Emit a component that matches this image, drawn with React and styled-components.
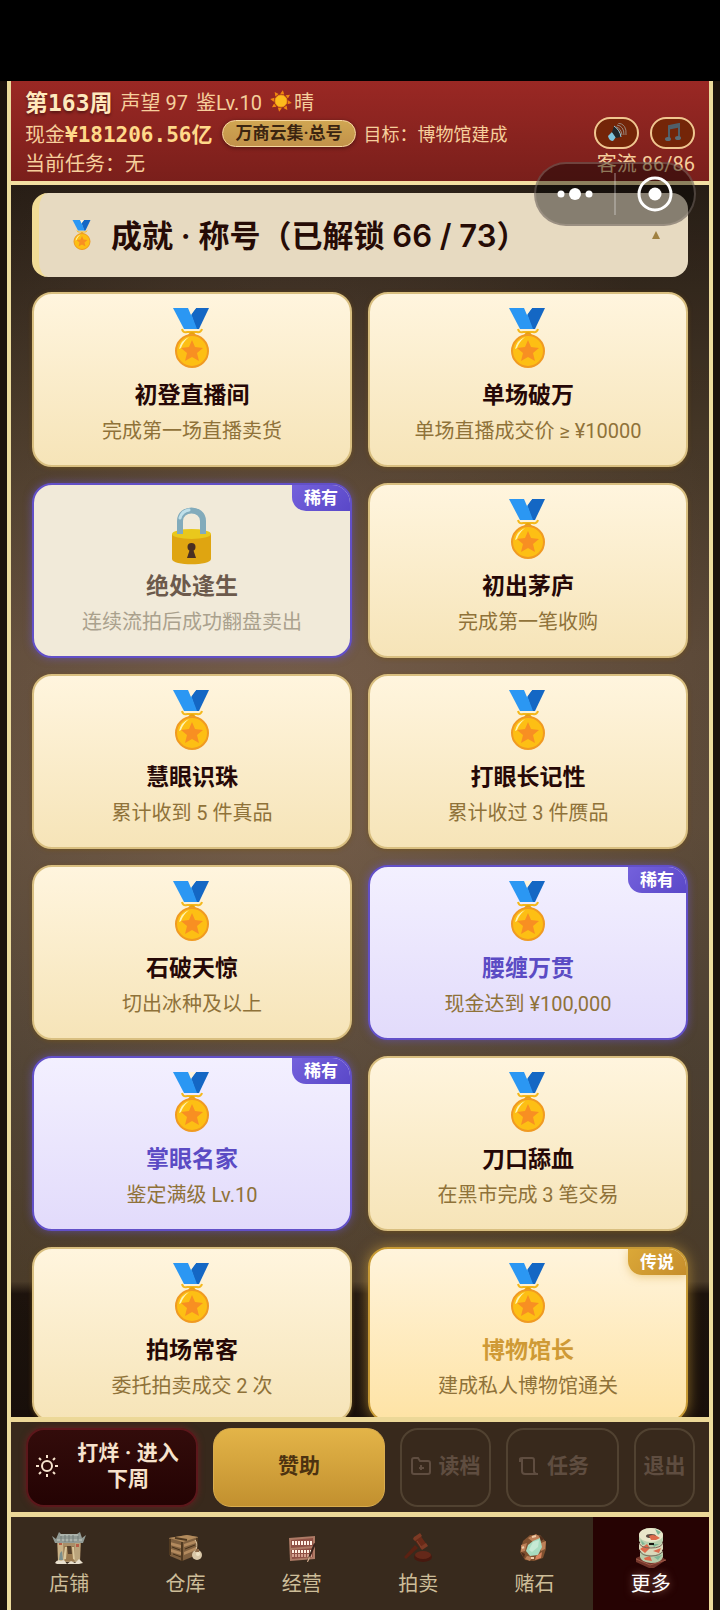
import { useState } from 'react';
import styled, { createGlobalStyle } from 'styled-components';

const achievements = [
    { name: '初登直播间', desc: '完成第一场直播卖货' },
    { name: '单场破万', desc: '单场直播成交价 ≥ ¥10000' },
    { name: '绝处逢生', desc: '连续流拍后成功翻盘卖出', rarity: 'rare', locked: true },
    { name: '初出茅庐', desc: '完成第一笔收购' },
    { name: '慧眼识珠', desc: '累计收到 5 件真品' },
    { name: '打眼长记性', desc: '累计收过 3 件赝品' },
    { name: '石破天惊', desc: '切出冰种及以上' },
    { name: '腰缠万贯', desc: '现金达到 ¥100,000', rarity: 'rare' },
    { name: '掌眼名家', desc: '鉴定满级 Lv.10', rarity: 'rare' },
    { name: '刀口舔血', desc: '在黑市完成 3 笔交易' },
    { name: '拍场常客', desc: '委托拍卖成交 2 次' },
    { name: '博物馆长', desc: '建成私人博物馆通关', rarity: 'legend' },
];

const rarityLabel = { rare: '稀有', legend: '传说' };

const MedalShape = () => (
    <>
        <path d="M22 33Q23 37 27 36H37Q41 37 42 33" fill="none" stroke="#f4b81c" strokeWidth="2" />
        <path d="M29 39Q32 35 35 39" fill="none" stroke="#e9a20e" strokeWidth="2" />
        <path d="M36 12H49L39 33H36L31 18Z" fill="#1467c4" />
        <path d="M13 12H29L37 33H24Z" fill="#2b97f3" />
        <path d="M28 12H36L31 19Z" fill="#fff3da" />
        <circle cx="32" cy="55" r="16" fill="#fdbf14" stroke="#f09a22" strokeWidth="2" />
        <path d="M19 53Q21 44 29 41Q23 46 21 52Z" fill="#fff3b0" />
        <path d="M32 44L35 51L43 52L37 57L39 65L32 61L25 65L27 57L21 52L29 51Z" fill="#f88f22" />
    </>
);

const MedalIcon = () => (
    <svg viewBox="0 8 64 76" aria-hidden="true"><MedalShape /></svg>
);

const LockIcon = () => (
    <svg viewBox="0 -1 64 76" aria-hidden="true">
        <path d="M12 38V63C12 70 51 70 51 63V38Z" fill="#dfa511" />
        <ellipse cx="31.5" cy="38" rx="19.5" ry="5" fill="#e9c81c" />
        <path d="M20 38V25C20 11 43 11 43 25V38" fill="none" stroke="#82abbb" strokeWidth="6" />
        <path d="M20 22Q22 15 29 14" fill="none" stroke="#bfe0ea" strokeWidth="3" strokeLinecap="round" />
        <circle cx="31.5" cy="51" r="4" fill="#4a2f22" />
        <path d="M30 53H33L36 62H27Z" fill="#4a2f22" />
    </svg>
);

const SunEmoji = () => (
    <svg width="22" height="22" viewBox="0 0 22 22" aria-hidden="true">
        <g fill="#f2880f">
            {[0, 45, 90, 135, 180, 225, 270, 315].map((a) => (
                <path key={a} d="M11 0L13 4H9Z" transform={`rotate(${a + 10} 11 11)`} />
            ))}
        </g>
        <circle cx="11" cy="11" r="6" fill="#fdbb1c" stroke="#f59a15" strokeWidth="1" />
    </svg>
);

const SpeakerIcon = () => (
    <svg width="20" height="20" viewBox="0 0 20 20" aria-hidden="true">
        <path d="M1 13L5 9L9 14L6 18Q2 18 1 13Z" fill="#7fc4dc" />
        <path d="M5 9L7 3Q13 7 14 14L9 15Z" fill="#20272b" />
        <path d="M7 3Q13 7 14 14" fill="none" stroke="#9ccfe0" strokeWidth="1" />
        <g fill="none" stroke="#98877c" strokeWidth="1">
            <path d="M9 4Q14 5 15 12" />
            <path d="M10 2Q17 3 17 12" />
            <path d="M11 0Q20 1 19 12" />
        </g>
    </svg>
);

const NoteIcon = () => (
    <svg width="18" height="20" viewBox="0 0 18 20" aria-hidden="true">
        <path d="M5 16V3L15 1V14" fill="none" stroke="#50606a" strokeWidth="2" />
        <path d="M5 5L15 3" stroke="#50606a" strokeWidth="3" />
        <ellipse cx="4" cy="16" rx="3" ry="2" fill="#5b6d78" />
        <ellipse cx="14" cy="15" rx="3" ry="2" fill="#5b6d78" />
    </svg>
);

const DayIcon = () => (
    <svg width="22" height="22" viewBox="0 0 22 22" fill="none" stroke="currentColor" strokeWidth="2" aria-hidden="true">
        <circle cx="11" cy="11" r="5" />
        <path d="M11 0V3M11 19V22M0 11H3M19 11H22M3 3L5 5M17 17L19 19M19 3L17 5M5 17L3 19" />
    </svg>
);

const FolderIcon = () => (
    <svg width="20" height="20" viewBox="0 0 20 20" fill="none" stroke="currentColor" strokeWidth="2" aria-hidden="true">
        <path d="M1 4Q1 2 3 2H7L9 5H17Q19 5 19 7V16Q19 18 17 18H3Q1 18 1 16Z" />
        <path d="M10 9V14M8 12H13" />
    </svg>
);

const ScrollIcon = () => (
    <svg width="20" height="20" viewBox="0 0 20 20" fill="none" stroke="currentColor" strokeWidth="2" aria-hidden="true">
        <path d="M1 6V3Q1 2 3 2H13Q15 2 15 4V15Q15 18 19 18H6Q3 18 3 15V3" />
    </svg>
);

const ShopIcon = () => (
    <svg width="36" height="36" viewBox="0 0 36 36" aria-hidden="true">
        <path d="M6 12H30L29 32H7Z" fill="#a98e68" />
        <path d="M7 13H12V32H7Z" fill="#c9b287" />
        <path d="M24 13H29V32H24Z" fill="#baa47c" />
        <path d="M13 16H23V31H13Z" fill="#9a7a50" />
        <path d="M16 16H20L21 24H17Z" fill="#54402a" />
        <path d="M14 17L16 17L15 29L12 30ZM21 17H23L24 30L22 29Z" fill="#dac79b" />
        <path d="M8 13H11V15H8ZM25 14H28V17H25Z" fill="#b85c45" />
        <path d="M1 6L5 9L8 2L10 4H26L29 2L31 8L35 5L32 13H4Z" fill="#929b95" />
        <path d="M9 5H27M6 10H31" stroke="#c6cbc1" strokeWidth="1" />
        <path d="M10 6V11M14 5V12M18 5V12M22 5V12M27 6V11" stroke="#737d78" strokeWidth="1" />
        <path d="M4 33Q6 29 10 31L13 30L16 34L20 31L24 33L28 29L32 33L28 34H6Z" fill="#e9e0ce" />
        <path d="M9 23L11 21L12 30H8Z" fill="#7c8f8c" />
    </svg>
);

const CrateIcon = () => (
    <svg width="36" height="36" viewBox="0 0 36 36" aria-hidden="true">
        <path d="M2 8L20 5L31 7L30 25L15 31L3 26Z" fill="#80603f" />
        <path d="M2 8L20 5L31 7L16 12Z" fill="#b38b5c" />
        <path d="M3 12L14 15V18L3 15ZM4 19L14 22V25L4 22ZM17 14L29 10V13L17 17ZM17 22L29 17V20L17 25Z" fill="#b38a5e" />
        <path d="M3 9V25M15 12V31M30 8V24M8 8L20 10" stroke="#503920" strokeWidth="2" />
        <path d="M5 17L13 20M18 19L28 15M6 24L14 27" stroke="#473119" strokeWidth="1" />
        <path d="M28 10Q31 13 29 20" fill="none" stroke="#d9c2a0" strokeWidth="1" />
        <circle cx="30" cy="25" r="5" fill="#d9c7a8" />
        <path d="M29 19H32V22H28Z" fill="#8d6a49" />
        <circle cx="31" cy="24" r="2" fill="#f0e2c5" />
    </svg>
);

const LedgerIcon = () => (
    <svg width="36" height="36" viewBox="0 0 36 36" aria-hidden="true">
        <path d="M5 8L31 6V29L6 31Z" fill="#ad7a65" />
        <path d="M7 10L29 8V16L7 18ZM7 20L29 18V27L8 29Z" fill="#8f5044" />
        {[8, 11, 14, 17, 20, 23, 26].map((x) => (
            <g key={x}>
                <path d={`M${x} 11H${x + 2}V15H${x}Z`} fill="#fff0e4" />
                <path d={`M${x} 20H${x + 2}V23H${x}Z`} fill="#fff0e1" />
                <path d={`M${x} 24H${x + 2}V27H${x}Z`} fill="#d4a08e" />
            </g>
        ))}
        <path d="M30 13L32 14L25 30L23 32L24 28Z" fill="#38231b" />
        <path d="M25 26L26 28L24 32H23Z" fill="#d8b394" />
    </svg>
);

const GavelIcon = () => (
    <svg width="36" height="36" viewBox="0 0 36 36" aria-hidden="true">
        <ellipse cx="23" cy="27" rx="9" ry="5" fill="#47190f" />
        <ellipse cx="23" cy="25" rx="8" ry="4" fill="#642819" />
        <path d="M4 27L15 15L18 18L6 29Z" fill="#5b2112" />
        <path d="M14 9L20 5L27 15L21 19Z" fill="#692a18" />
        <path d="M14 7L20 3L22 6L15 11L13 9ZM20 17L26 13L28 16L22 20Z" fill="#7d3a24" />
        <path d="M17 11L21 17" stroke="#85442f" strokeWidth="1" />
    </svg>
);

const StoneIcon = () => (
    <svg width="36" height="36" viewBox="0 0 36 36" aria-hidden="true">
        <path d="M7 11L14 5L24 5L30 12L30 19L27 28L18 31L9 30L4 22Z" fill="#80512f" />
        <path d="M12 8L20 4L25 8L17 12ZM5 15L11 13L9 21L5 22ZM25 13L30 11L29 19L25 21ZM11 26L16 27L14 31L9 29Z" fill="#bd8058" />
        <path d="M17 11L24 8L26 17L22 25L14 26L10 21L12 15Z" fill="#a8dcc0" />
        <path d="M17 12L23 10L22 17L16 22L13 20Z" fill="#c6e9d4" />
        <path d="M20 26L26 22L25 28L19 30Z" fill="#d7845d" />
        <path d="M23 5L28 9L25 11ZM5 22L9 24L8 28Z" fill="#4f2d1b" />
        <path d="M16 7L20 6M6 18L8 17M15 28L18 28" stroke="#f0cda9" strokeWidth="2" />
    </svg>
);

const JadeIcon = () => (
    <svg width="36" height="44" viewBox="0 0 36 44" aria-hidden="true">
        <path d="M3 32L12 28H25L33 34L21 42H16L3 36Z" fill="#74362b" />
        <path d="M3 33L17 39L33 34" fill="none" stroke="#a35a48" strokeWidth="1" />
        <path d="M7 27Q8 22 18 22Q29 22 30 27V31Q28 37 18 37Q8 36 7 31Z" fill="#b9ccaa" />
        <path d="M6 18Q8 13 18 13Q29 13 30 18V23Q28 29 18 29Q8 28 6 23Z" fill="#dbd9ba" />
        <path d="M6 10Q7 2 18 2Q29 2 30 10V15Q28 21 18 21Q8 20 6 15Z" fill="#b9cfad" />
        <ellipse cx="18" cy="9" rx="12" ry="7" fill="#e9e6ca" />
        <ellipse cx="18" cy="10" rx="5" ry="2" fill="#5c4940" />
        <path d="M16 10Q21 7 27 12L23 14H18ZM7 23L14 18L17 22L12 27ZM20 25L28 22L26 27ZM11 32L17 30L19 35L12 34Z" fill="#dd6a4b" />
        <path d="M22 3L28 6L25 9ZM8 14L12 18L9 19ZM21 31L29 29L25 34ZM19 18L26 18L21 21Z" fill="#80b696" />
        <path d="M6 17Q8 22 18 22Q28 22 30 17M7 25Q9 30 18 30Q27 30 30 25" fill="none" stroke="#77675a" strokeWidth="1" />
        <path d="M16 17H21V19H16Z" fill="#1a1713" />
    </svg>
);

const tabs = [
    { label: '店铺', Icon: ShopIcon },
    { label: '仓库', Icon: CrateIcon },
    { label: '经营', Icon: LedgerIcon },
    { label: '拍卖', Icon: GavelIcon },
    { label: '赌石', Icon: StoneIcon },
    { label: '更多', Icon: JadeIcon },
];

const App = () => {
    const [tab, setTab] = useState('更多');
    const [open, setOpen] = useState(true);

    return (
        <Screen>
            <GlobalStyle />
            <StatusBar />
            <Frame>
                <TopBar>
                    <InfoRow>
                        <Week>第163周</Week>
                        <span>声望 97</span>
                        <span>鉴Lv.10</span>
                        <Weather><SunEmoji />晴</Weather>
                    </InfoRow>
                    <InfoRow>
                        <Cash>现金<b>¥181206.56亿</b></Cash>
                        <RankPill>万商云集·总号</RankPill>
                        <Goal>目标：博物馆建成</Goal>
                        <SoundGroup>
                            <SoundButton aria-label="音效"><SpeakerIcon /></SoundButton>
                            <SoundButton aria-label="音乐"><NoteIcon /></SoundButton>
                        </SoundGroup>
                    </InfoRow>
                    <TaskRow>
                        <span>当前任务：无</span>
                        <Traffic>客流 86/86</Traffic>
                    </TaskRow>
                </TopBar>
                <Content>
                    <Summary aria-expanded={open} onClick={() => setOpen(!open)}>
                        <SummaryMedal viewBox="12 11 40 62" aria-hidden="true"><MedalShape /></SummaryMedal>
                        <SummaryTitle>成就 · 称号（已解锁 66 / 73）</SummaryTitle>
                        <Caret $open={open} />
                    </Summary>
                    {open && (
                        <Grid>
                            {achievements.map((item) => (
                                <Card key={item.name} $rarity={item.rarity} $locked={item.locked}>
                                    {item.rarity && <Badge $rarity={item.rarity}>{rarityLabel[item.rarity]}</Badge>}
                                    {item.locked ? <LockIcon /> : <MedalIcon />}
                                    <CardName $rarity={item.rarity} $locked={item.locked}>{item.name}</CardName>
                                    <CardDesc $locked={item.locked}>{item.desc}</CardDesc>
                                </Card>
                            ))}
                        </Grid>
                    )}
                </Content>
                <Actions>
                    <NextButton><DayIcon /><span>打烊 · 进入下周</span></NextButton>
                    <GoldButton>赞助</GoldButton>
                    <GhostButton><FolderIcon />读档</GhostButton>
                    <GhostButton $left><ScrollIcon />任务</GhostButton>
                    <GhostButton>退出</GhostButton>
                </Actions>
                <TabBar>
                    {tabs.map(({ label, Icon }) => (
                        <Tab key={label} $active={tab === label} onClick={() => setTab(label)}>
                            <TabIcon><Icon /></TabIcon>
                            {label}
                        </Tab>
                    ))}
                </TabBar>
            </Frame>
            <Capsule>
                <CapsuleButton aria-label="菜单">
                    <svg width="36" height="14" viewBox="0 0 36 14" fill="#fff">
                        <circle cx="4" cy="7" r="3.5" />
                        <circle cx="18" cy="7" r="6" />
                        <circle cx="32" cy="7" r="3.5" />
                    </svg>
                </CapsuleButton>
                <CapsuleLine />
                <CapsuleButton aria-label="关闭">
                    <svg width="36" height="36" viewBox="0 0 36 36">
                        <circle cx="18" cy="18" r="16" fill="none" stroke="#fff" strokeWidth="3" />
                        <circle cx="18" cy="18" r="6.5" fill="#fff" />
                    </svg>
                </CapsuleButton>
            </Capsule>
        </Screen>
    );
};

const GlobalStyle = createGlobalStyle`
    * {
        box-sizing: border-box;
    }
    body {
        margin: 0;
        background: #1c120c;
        font-family: Roboto, "Noto Sans CJK SC", sans-serif;
    }
    button {
        margin: 0;
        padding: 0;
        border: none;
        background: none;
        font-family: inherit;
        color: inherit;
        cursor: pointer;
    }
    svg {
        display: block;
        flex: none;
    }
`;
const Screen = styled.div`
    position: relative;
    display: flex;
    flex-direction: column;
    height: 100vh;
    overflow: hidden;
`;
const StatusBar = styled.div`
    flex: none;
    height: 81px;
    background: #000;
`;
const Frame = styled.div`
    flex: 1;
    min-height: 0;
    display: flex;
    flex-direction: column;
    margin: 0 7px;
    border: solid #ecdb9c;
    border-width: 0 4px;
`;
const TopBar = styled.header`
    flex: none;
    padding: 4px 14px 5px;
    border-bottom: 4px solid #f3dfa2;
    background: linear-gradient(#9a2824, #7a1f1b);
    color: #f6cf9c;
    font-size: 20px;
`;
const InfoRow = styled.div`
    display: flex;
    align-items: center;
    gap: 8px;
    height: 32px;
    white-space: nowrap;
`;
const TaskRow = styled(InfoRow)`
    height: 27px;
`;
const Week = styled.strong`
    font-family: "DejaVu Sans Mono", "Noto Sans CJK SC", monospace;
    font-size: 23px;
    color: #ffe9bd;
    text-shadow: 0 2px 3px rgba(0, 0, 0, 0.4);
`;
const Weather = styled.span`
    display: flex;
    align-items: center;
    gap: 2px;
`;
const Cash = styled.span`
    b {
        font-family: "DejaVu Sans Mono", "Noto Sans CJK SC", monospace;
        font-size: 21px;
        color: #ffd98a;
    }
`;
const RankPill = styled.span`
    height: 27px;
    margin-left: 2px;
    padding: 0 12px;
    border: 1px solid #f7d9a0;
    border-radius: 14px;
    background: linear-gradient(#d0a652, #c2924a);
    color: #3a2410;
    font-size: 17px;
    font-weight: 700;
    line-height: 24px;
    box-shadow: 0 1px 4px rgba(0, 0, 0, 0.4);
`;
const Goal = styled.span`
    font-size: 18px;
`;
const SoundGroup = styled.div`
    display: flex;
    gap: 11px;
    margin-left: auto;
`;
const SoundButton = styled.button`
    display: flex;
    align-items: center;
    justify-content: center;
    width: 45px;
    height: 32px;
    border: 2px solid #f0c690;
    border-radius: 16px;
    background: #742508;
`;
const Traffic = styled.span`
    margin-left: auto;
`;
const Content = styled.main`
    flex: 1;
    min-height: 0;
    overflow: hidden;
    padding: 8px 21px 0;
    background:
        radial-gradient(ellipse at 40% 45%, rgba(150, 118, 98, 0.3), rgba(0, 0, 0, 0.12) 75%),
        linear-gradient(#2c2118 0%, #4d3d2b 20%, #67523f 38%, #685440 52%, #564838 72%, #54432e 89%, #20150e 90%, #1b110b 100%);
`;
const Summary = styled.button`
    display: flex;
    align-items: center;
    width: 100%;
    height: 84px;
    padding: 0 28px 0 33px;
    border-left: 7px solid #f1dc96;
    border-radius: 16px;
    background: #e7dac1;
    text-align: left;
`;
const SummaryMedal = styled.svg`
    width: 20px;
    height: 34px;
`;
const SummaryTitle = styled.span`
    flex: 1;
    margin-left: 19px;
    padding-bottom: 4px;
    color: #260b06;
    font-family: Inter, "Noto Sans CJK SC", sans-serif;
    font-size: 31px;
    font-weight: 600;
`;
const Caret = styled.span`
    border: 4px solid transparent;
    border-top-width: 0;
    border-bottom: 8px solid #a08142;
    transform: rotate(${(p) => (p.$open ? 0 : 180)}deg);
`;
const Grid = styled.ul`
    display: grid;
    grid-template-columns: 1fr 1fr;
    gap: 16px;
    margin: 15px 0 0;
    padding: 0;
    list-style: none;
`;
const cardBorder = { rare: '#6250c8', legend: '#c79a35' };
const cardFill = {
    rare: 'linear-gradient(#f3f0ff, #e2dbfb)',
    legend: 'linear-gradient(#fff4dc, #fee3a5)',
};
const cardGlow = {
    rare: '0 0 8px rgba(104, 84, 210, 0.6)',
    legend: '0 0 14px rgba(220, 170, 60, 0.6)',
};
const Card = styled.li`
    position: relative;
    display: flex;
    flex-direction: column;
    align-items: center;
    padding: 10px 10px 21px;
    overflow: hidden;
    border: 2px solid ${(p) => cardBorder[p.$rarity] || '#d9bf80'};
    border-radius: 20px;
    background: ${(p) => (p.$locked ? '#f1ead9' : cardFill[p.$rarity] || 'linear-gradient(#fff5de, #f6e4b8)')};
    box-shadow: ${(p) => cardGlow[p.$rarity] || '0 1px 4px rgba(120, 85, 20, 0.6)'};

    svg {
        width: 64px;
        height: 76px;
    }
`;
const Badge = styled.span`
    position: absolute;
    top: 0;
    right: 0;
    padding: 0 12px;
    border-bottom-left-radius: 14px;
    background: ${(p) => (p.$rarity === 'legend' ? 'linear-gradient(135deg, #dba838, #c68e2c)' : 'linear-gradient(135deg, #7461dc, #5a48c8)')};
    box-shadow: ${(p) => (p.$rarity === 'legend' ? '0 2px 8px rgba(220, 170, 60, 0.5)' : 'none')};
    color: #fff;
    font-size: 17px;
    font-weight: 700;
    line-height: 26px;
`;
const nameColor = { rare: '#5b4bc4', legend: '#cf9a35' };
const CardName = styled.h3`
    margin: 2px 0 0;
    color: ${(p) => (p.$locked ? '#6c5a4c' : nameColor[p.$rarity] || '#260806')};
    font-size: 23px;
    font-weight: 700;
    line-height: 28px;
`;
const CardDesc = styled.p`
    margin: 8px 0 0;
    color: ${(p) => (p.$locked ? '#aaa18d' : '#8f7239')};
    font-size: 20px;
    line-height: 26px;
    white-space: nowrap;
`;
const Actions = styled.div`
    flex: none;
    display: grid;
    grid-template-columns: 172fr 172fr 91fr 113fr 61fr;
    gap: 15px;
    padding: 6px 14px 5px 15px;
    border-top: 5px solid #ecd898;
    background: #38291c;
`;
const ActionButton = styled.button`
    display: flex;
    align-items: center;
    justify-content: center;
    gap: 10px;
    min-width: 0;
    height: 79px;
    padding-bottom: 4px;
    border-radius: 18px;
    font-family: Inter, "Noto Sans CJK SC", sans-serif;
    font-size: 21px;
    font-weight: 600;
    line-height: 26px;
    white-space: nowrap;
`;
const NextButton = styled(ActionButton)`
    padding: 0 8px 4px;
    border: 2px solid #5c171b;
    background: linear-gradient(#330c0b, #240303);
    color: #f7e3cd;
    box-shadow: 0 0 6px rgba(120, 30, 35, 0.7);

    span {
        flex: 1;
        white-space: normal;
    }
`;
const GoldButton = styled(ActionButton)`
    border: 1px solid #d9ac4e;
    background: linear-gradient(#e3b448, #c2902f);
    color: #4c3210;
`;
const GhostButton = styled(ActionButton)`
    justify-content: ${(p) => (p.$left ? 'flex-start' : 'center')};
    gap: 8px;
    padding-left: ${(p) => (p.$left ? 11 : 0)}px;
    border: 2px solid #514231;
    color: #5f4d40;
`;
const TabBar = styled.nav`
    flex: none;
    display: grid;
    grid-template-columns: repeat(6, 1fr);
    height: 98px;
    border-top: 5px solid #ecd898;
    background: #382a1d;
`;
const Tab = styled.button`
    display: flex;
    flex-direction: column;
    align-items: center;
    padding-top: 9px;
    background: ${(p) => (p.$active ? '#260303' : 'none')};
    color: ${(p) => (p.$active ? '#fff' : '#cdbd99')};
    font-size: 20px;
    line-height: 28px;
    text-shadow: ${(p) => (p.$active ? '0 0 8px rgba(255, 200, 180, 0.5)' : 'none')};
`;
const TabIcon = styled.span`
    display: flex;
    align-items: center;
    height: 44px;
`;
const Capsule = styled.div`
    position: absolute;
    top: 162px;
    right: 24px;
    display: flex;
    align-items: center;
    width: 162px;
    height: 64px;
    border: 2px solid rgba(200, 180, 170, 0.3);
    border-radius: 32px;
    background: rgba(0, 0, 0, 0.42);
`;
const CapsuleButton = styled.button`
    flex: 1;
    display: flex;
    align-items: center;
    justify-content: center;
    height: 100%;
`;
const CapsuleLine = styled.span`
    width: 2px;
    height: 42px;
    background: rgba(255, 255, 255, 0.25);
`;

export default App;
